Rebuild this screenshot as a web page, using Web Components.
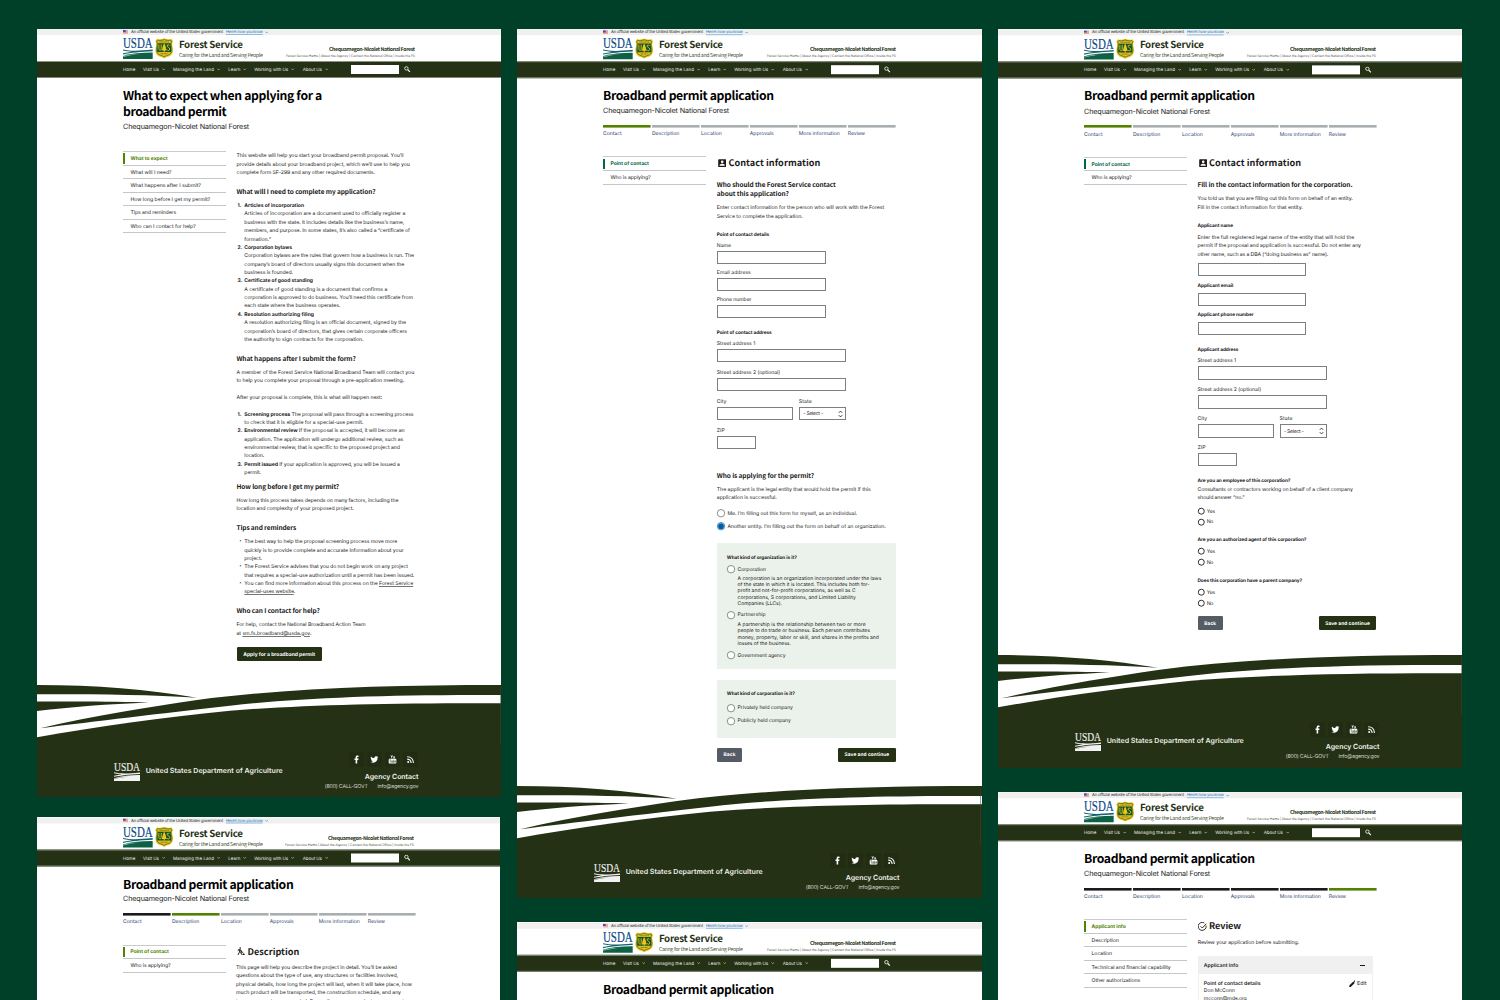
<!DOCTYPE html>
<html lang="en">
<head>
<meta charset="utf-8">
<title>Forest Service broadband permit</title>
<style>
html,body{margin:0;padding:0;width:1500px;height:1000px;overflow:hidden;background:#004028}
</style>
</head>
<body>
<permit-board></permit-board>
<script>
const BODY = 'Inter,"Liberation Sans",sans-serif';
const HEAD = '"Noto Sans CJK SC","Open Sans",sans-serif';

function define(name, render) {
  customElements.define(name, class extends HTMLElement {
    connectedCallback() {
      if (this.shadowRoot) return;
      this.attachShadow({mode: 'open'}).innerHTML = render(this);
    }
  });
}

/* One line of text, tracked to a given measure. */
customElements.define('fs-text', class extends HTMLElement {
  connectedCallback() {
    if (this.shadowRoot) return;
    const a = (n, d) => this.getAttribute(n) || d;
    const head = this.hasAttribute('head');
    this.attachShadow({mode: 'open'}).innerHTML = `<style>
      :host{display:block;white-space:nowrap;
        font:${a('weight', 400)} ${a('size', 5.2)}px/${a('h', 8)}px ${head ? HEAD : BODY};
        height:${a('h', 8)}px;text-rendering:geometricPrecision;flex:none;color:${a('color', 'inherit')}}
      span{display:inline-block;height:100%;line-height:inherit;vertical-align:top;padding-top:${a('drop', head ? 0 : .8)}px}
    </style><span><slot></slot></span>`;
    const span = this.shadowRoot.querySelector('span');
    const w = parseFloat(a('w', 0));
    if (w) {
      const n = this.textContent.length;
      const nat = span.getBoundingClientRect().width;
      const k = (w - nat) / Math.max(1, n - 1);
      span.style.letterSpacing = k.toFixed(4) + 'px';
      span.style.marginRight = (-k).toFixed(4) + 'px';
    }
  }
});

const txt = (w, text, o = {}) => `<fs-text w="${w}" ${Object.entries(o).map(([k, v]) => `${k}="${v}"`).join(' ')}>${text}</fs-text>`;
/* Vertical rhythm helpers: rows are [top, height, html]. */
const T = (y, w, text, o = {}) => { const h = o.h || 8; return [y - h / 2, h, txt(w, text, {h, ...o})]; };
const H = (y, w, text, o = {}) => T(y - .4, w, text, {head: '', weight: 700, size: 6.5, h: 10, ...o});
const L = (y, w, text, o = {}) => T(y, w, text, {weight: 700, size: 4.75, h: 6, drop: 1, ...o});
const LAB = (y, w, text) => T(y, w, text, {size: 5.1, h: 6});
const B = (top, h, html) => [top, h, html];
const IN = (top, w) => B(top, 13.2, `<fs-input style="--w:${w}px"></fs-input>`);
function stack(start, rows) {
  let c = start;
  return rows.map(([t, h, html]) => {
    const m = (t - c).toFixed(2); c = t + h;
    return `<div style="margin-top:${m}px;height:${h}px">${html}</div>`;
  }).join('');
}
const li = (y, n, w, text, o = {}) => { const [t, h] = [y - 4, 8];
  return [t, h, `<div style="display:flex">${n ? `<div style="width:7.8px;padding-left:${n === '•' ? 2.8 : 1}px;box-sizing:border-box">${txt(0, n, {weight: n === '•' ? 400 : 700, size: n === '•' ? 4.2 : 5})}</div>` : '<div style="width:7.8px"></div>'}${txt(w, text, o)}</div>`]; };

define('fs-input', () => `<style>:host{display:block;box-sizing:border-box;width:var(--w);height:13.2px;border:1px solid #7d8083;background:#fff}</style>`);
define('fs-select', () => `<style>:host{display:flex;align-items:center;justify-content:space-between;box-sizing:border-box;width:47px;height:13.2px;border:1px solid #7d8083;padding:0 1.5px 0 3.4px;background:#fff}</style>
  ${txt(20, '- Select -', {size: 5})}<svg width="5" height="8" viewBox="0 0 5 8" fill="none" stroke="#222" stroke-width=".9"><path d="M.8 2.8L2.5 1.1 4.2 2.8M.8 5.2L2.5 6.9 4.2 5.2"/></svg>`);
define('fs-radio', el => {
  const small = el.hasAttribute('small'), r = small ? 3 : 3.7, on = el.hasAttribute('checked');
  return `<style>:host{display:flex;align-items:center;height:8px;gap:2.6px}svg{flex:none;overflow:visible}</style>
  <svg width="${r * 2 + .6}" height="8" viewBox="${-r - .3} -4.2 ${r * 2 + .6} 8"><circle r="${r}" fill="#fff" stroke="${on ? '#005ea2' : small ? '#1b1b1b' : '#5c5f62'}" stroke-width="${small ? .9 : .7}"/>${on ? '<circle r="2.9" fill="#005ea2"/>' : ''}</svg><slot></slot>`;
});
define('fs-button', el => `<style>:host{display:flex;align-items:center;justify-content:center;box-sizing:border-box;width:var(--w);height:14px;border-radius:1.2px;background:${el.hasAttribute('gray') ? '#565c65' : '#253115'};color:#fff}</style><slot></slot>`);

const usda = (w, h, ink, a, b, gap) => `<svg width="${w}" height="${h}" viewBox="0 0 29.6 21" preserveAspectRatio="none" style="flex:none;overflow:visible"><text x="0" y="10.2" font-family="Liberation Serif,serif" font-size="14.6" fill="${ink}" stroke="${ink}" stroke-width=".2" textLength="29.6" lengthAdjust="spacingAndGlyphs">USDA</text>
  <path d="M0 11.4C7 13 14 13.2 29.6 11.6V13.2C17 13.6 8 14.8 0 16.4V15.2C3 14.6 6 14 9 13.7 6 13.5 3 13 0 12.4Z" fill="${a}"/><path d="M0 17.9C9 15.4 19 14.4 29.6 14.5V21H0Z" fill="${b}"/><path d="M0 18.5C7 16.6 12 16.1 17 16 11 16.6 6 17.4 0 19Z" fill="${gap}" fill-opacity=".7"/></svg>`;

define('fs-shield', () => `<style>:host{display:block;width:18.4px;height:20.6px;flex:none}svg{display:block}</style>
  <svg width="18.4" height="20.6" viewBox="0 0 18.4 20.6"><path d="M2 .8C4.2 1.7 6.2 1.5 9.2.3 12.2 1.5 14.2 1.7 16.4.8L18.1 3.2C16.8 5.2 17.2 7 17.7 9.2 18.4 12.8 18 16.3 14.9 18 12.6 19 10.8 19.2 9.2 20.4 7.6 19.2 5.8 19 3.5 18 .4 16.3 0 12.8.7 9.2 1.2 7 1.6 5.2.3 3.2Z" fill="#f3c419"/>
  <path d="M2.6 2.1C4.6 2.7 6.6 2.5 9.2 1.6 11.8 2.5 13.8 2.7 15.8 2.1L16.7 3.2C15.8 5.2 16 7 16.6 9.4 17.2 12.6 16.8 15.3 14.3 16.7 12.2 17.7 10.6 17.8 9.2 18.8 7.8 17.8 6.2 17.7 4.1 16.7 1.6 15.3 1.2 12.6 1.8 9.4 2.4 7 2.6 5.2 1.7 3.2Z" fill="#e6b91c" stroke="#2c6a2a" stroke-width=".7"/>
  <path d="M2.7 5.3H15.7C15.5 8 16.6 10.5 16.1 14H2.3C1.8 10.5 2.9 8 2.7 5.3Z" fill="#0d5429"/>
  <path d="M9.2 5.2L10.5 7.8 10.2 7.8 11.2 10 10.8 10 11.9 12.6H9.7V14H8.7V12.6H6.5L7.6 10 7.2 10 8.2 7.8 7.9 7.8Z" fill="#f3c419"/>
  <path d="M3.9 6.4V10.8C3.9 12.9 6.2 12.9 6.2 10.8V6.4" fill="none" stroke="#f3c419" stroke-width=".9"/>
  <path d="M14.5 7.6C13.8 6.1 11.9 6.6 12.1 8 12.3 9.4 14.7 9.2 14.7 11 14.7 12.9 12.6 12.9 12 11.5" fill="none" stroke="#f3c419" stroke-width=".9"/>
  <path d="M4.6 3.9H13.8M5.8 15.7H12.6" stroke="#55762a" stroke-width=".8" stroke-dasharray="1 .4"/></svg>`);

const chev = (c = '#dfe3d8') => `<svg width="3.4" height="3" viewBox="0 0 3.4 3" fill="none" stroke="${c}" stroke-width=".6" style="flex:none;display:block"><path d="M.5.7L1.7 1.9 2.9.7"/></svg>`;

define('fs-header', el => {
  const g = (w, t, after, arrow) => `<div class="n" style="margin-right:${after}px">${txt(w, t, {size: 4.45, h: 6, drop: 1.7})}${arrow ? chev() : ''}</div>`;
  return `<style>
  :host{display:block;height:49px;flex:none}
  .ban{height:6.4px;padding-left:86px;background:#f0f0f0;display:flex;align-items:center;color:#1b1b1b}
  .main{height:26px;display:flex;padding:0 86px;box-sizing:border-box}
  .brand{padding:4px 0 0 5px;color:#253115}
  .right{margin-left:auto;display:flex;flex-direction:column;align-items:flex-end;padding-top:11.3px;color:#253115}
  .nav{height:16.2px;background:#253115;border-top:1px solid #8b9283;border-bottom:1px solid #7d8574;box-sizing:border-box;display:flex;align-items:center;padding-left:86px;color:#e6e8e2}
  .n{display:flex;align-items:center;gap:3px}
  .s{width:48px;height:9.4px;background:#fff;flex:none}
  </style>
  <div class="ban"><svg width="5" height="4" viewBox="0 0 5 4" style="margin-right:3px"><path fill="#fff" d="M0 0h5v4H0z"/><path stroke="#db3e1f" stroke-width=".5" d="M0 .25H5M0 1.25H5M0 2.25H5M0 3.25H5"/><path fill="#3c4fc4" d="M0 0h2.7v2.2H0z"/></svg>
  ${txt(92, 'An official website of the United States government', {size: 4.15, h: 5, drop: .2})}<div style="width:3px"></div>${txt(37, "<span style='text-decoration:underline;text-decoration-color:#8fbbe0;text-decoration-thickness:.4px;text-underline-offset:.7px'>Here’s how you know</span>", {size: 4.15, h: 5, color: '#2378c3', drop: .2})}<div style="width:2px"></div>${chev('#2378c3')}</div>
  <div class="main"><div style="padding-top:3px">${usda(29.7, 21, '#0b4a86', '#14606f', '#0d6245', '#fff')}</div><fs-shield style="margin:2.7px 0 0 2.8px"></fs-shield>
  <div class="brand">${txt(64, 'Forest Service', {head: '', weight: 700, size: 9.7, h: 10})}<div style="height:3px"></div>${txt(84, 'Caring for the Land and Serving People', {head: '', size: 5.25, h: 7, color: '#3f5230'})}</div>
  <div class="right">${txt(86, 'Chequamegon-Nicolet National Forest', {head: '', weight: 700, size: 5.2, h: 6})}${txt(129, 'Forest Service Home | About the Agency | Contact the National Office | Inside the FS', {size: 3.4, h: 6, color: '#555e4b'})}</div></div>
  <div class="nav">${g(12.3, 'Home', 7.7)}${g(16, 'Visit Us', 7.5, 1)}${g(41, 'Managing the Land', 7.9, 1)}${g(12.3, 'Learn', 7.3, 1)}${g(34, 'Working with Us', 8.1, 1)}${g(19.3, 'About Us', 23, 1)}<div class="s"></div>
  <svg width="6.4" height="6.4" viewBox="0 0 6.4 6.4" style="margin-left:4.8px" fill="none" stroke="#fff"><circle cx="2.4" cy="2.4" r="1.7" stroke-width=".8"/><path d="M3.7 3.7L5.9 5.9" stroke-width="1.1"/></svg></div>`;
});

define('fs-footer', () => {
  const ic = p => `<div class="i"><svg width="9" height="9" viewBox="0 0 9 9" fill="#fff">${p}</svg></div>`;
  return `<style>:host{display:block;height:var(--fh,112px);position:relative;flex:none;overflow:hidden;color:#eef0ea}
  .w{position:absolute;left:0;top:0}
  .c{position:relative;display:flex;justify-content:space-between;padding:67px 82.5px 0 77px}
  .l{display:flex;gap:5.7px;padding-top:9.6px}
  .r{display:flex;flex-direction:column;align-items:flex-end}
  .ii{display:flex;gap:3px;margin-right:1px}.i{width:15px;height:15px;background:#212c12;display:flex;align-items:center;justify-content:center}
  </style><svg class="w" width="465" height="113" viewBox="0 0 465 113" fill="#253115"><path d="M0 0C60 0 110 4.5 160 12.7 110 9.6 60 9.2 0 9.3Z"/><path d="M0 16.6C50 16.2 85 16.6 112 17.4 70 19 35 21.8 0 26Z"/><path d="M3 43.3C60 30 110 22.5 160 15 250 3.2 350 0 465 0V10C350 9.3 260 13 193 20.7 120 29 60 36 3 43.3Z"/><path d="M0 52.3C60 41.5 130 31.8 193 25.7 270 19.8 350 18 465 18.3V113H0Z"/><path d="M463.5 2V59" stroke="#3d4930" stroke-width=".5"/></svg>
  <div class="c"><div class="l">${usda(26, 19, '#f2f2f2', '#f2f2f2', '#f2f2f2', '#253115')}${txt(137, 'United States Department of Agriculture', {weight: 600, size: 7, h: 18, drop: 0})}</div>
  <div class="r"><div class="ii">${ic('<path d="M3.6 8.5V5H2.5V3.6H3.6V2.6C3.6 1.2 4.4.6 5.5.6L6.6.7V2H5.9C5.3 2 5.2 2.3 5.2 2.7V3.6H6.5L6.3 5H5.2V8.5Z"/>')}${ic('<path d="M8.3 1.9C8 2.1 7.7 2.1 7.4 2.2 7.8 2 8 1.7 8.1 1.3L7.1 1.7C6 .6 4.2 1.4 4.4 3.1 3 3 1.8 2.4 1 1.4.5 2.2.8 3.1 1.5 3.6L.8 3.4C.8 4.3 1.4 4.9 2.1 5.1H1.4C1.6 5.8 2.2 6.2 2.9 6.2 2.2 6.8 1.4 7 .5 6.9 4 8.9 7.7 6.9 7.6 2.8Z"/>')}${ic('<path d="M2.5.2H3.3L3.7 1.5 4.1.2H4.8L4.1 2.2V3.3H3.4V2.2ZM5 1.2H5.6V2.9L6.1 2.7V1.2H6.8V3.3H5.1ZM1.6 3.8H7.5C8.2 3.8 8.4 4.4 8.4 6.2S8.2 8.6 7.5 8.6H1.6C.8 8.6.7 8 .7 6.2S.8 3.8 1.6 3.8Z"/><path d="M1.5 4.8H3.1M2.3 4.8V7.8M3.5 5.5V7.4H4.5V5.5M5.3 4.6V7.5H6.1V5.8H5.3M7.7 7.3H6.9V5.8H7.7V6.5H7" fill="none" stroke="#253115" stroke-width=".45"/>')}${ic('<circle cx="2.2" cy="7" r="1"/><path d="M1.2 4.1C3.5 4.1 5.1 5.7 5.1 8M1.2 1.7C4.8 1.7 7.4 4.3 7.4 8" fill="none" stroke="#fff" stroke-width="1.1"/>')}</div>
  <div style="height:5.2px"></div>${txt(53.7, 'Agency Contact', {weight: 600, size: 7, h: 8})}<div style="display:flex;gap:9.7px;margin-top:2.3px">${txt(43, '(800) CALL-GOVT', {size: 5.3, h: 7, color: '#d3d6cd', drop: 1.2})}${txt(41, 'info@agency.gov', {size: 5.3, h: 7, color: '#d3d6cd', drop: 1.2})}</div></div></div>`;
});

define('fs-steps', el => {
  const cur = +el.getAttribute('current');
  const s = [[18.7, 'Contact'], [27.3, 'Description'], [21, 'Location'], [24, 'Approvals'], [41, 'More information'], [17.3, 'Review']];
  return `<style>:host{display:flex;gap:1.2px;width:292.4px}.s{flex:1;width:0;color:#2a4270}.s svg{display:block;margin-bottom:2.6px;fill:#a9aeb1}.d svg{fill:#1b1b1b}.c svg{fill:#538200}</style>` +
    s.map(([w, t], i) => `<div class="s ${i < cur ? 'd' : i == cur ? 'c' : ''}"><svg width="48" height="3"><rect width="47.6" height="2.6"/></svg>${txt(w, t, {size: 5.1, h: 6, drop: .9})}</div>`).join('');
});

define('fs-sidenav', el => {
  const col = el.getAttribute('accent') || '#538200';
  return `<style>:host{display:block;width:103px;border-top:1px solid #c9cccd;flex:none}
  .i{height:13.53px;box-sizing:border-box;border-bottom:1px solid #c4c7c9;display:flex;align-items:center}
  .b{width:2.1px;height:10.3px;margin-right:5.4px}.on .b{background:${col}}.on{color:${col}}</style>` +
    JSON.parse(el.getAttribute('items')).map(([w, t], i) => `<div class="i ${i ? '' : 'on'}"><div class="b"></div>${txt(w, t, {size: i ? 5.2 : 5, weight: i ? 400 : 700, h: 8, drop: .6})}</div>`).join('');
});

define('fs-page', () => `<style>:host{display:flex;flex-direction:column;background:#fff;width:var(--pw,464px);height:var(--ph);flex:none;overflow:hidden;color:#1b1b1b}</style><slot></slot>`);

const nav = (items, accent) => `<fs-sidenav ${accent ? `accent="${accent}"` : ''} items='${JSON.stringify(items)}'></fs-sidenav>`;
/* Page shell: intro rows, then a two-column area with side navigation and main rows. */
function page({top, h, w = 464, dy = 0, fh = 112, intro, navTop, side, mainX, rows, footer}) {
  const introH = navTop - top - 49;
  return `<fs-page style="--ph:${h}px;--pw:${w}px"><fs-header style="margin-bottom:${dy}px;transform:translateY(${dy}px)"></fs-header>
  <div style="height:${introH - dy}px;padding-left:86px;flex:none">${stack(top + 49 + dy, intro)}</div>
  ${side ? `<div style="display:flex;padding-left:86px;align-items:flex-start;flex:1;min-height:0">${side}<div style="margin-left:${mainX - 189}px">${stack(navTop, rows)}</div></div>` : ''}
  ${footer ? `<fs-footer style="--fh:${fh}px"></fs-footer>` : ''}</fs-page>`;
}
const title = (y, w, t) => T(y - .8, w, t, {head: '', weight: 700, size: 12.2, h: 16, color: '#000'});
const sub = (y) => T(y, 126.2, 'Chequamegon-Nicolet National Forest', {size: 7.2, h: 9, drop: .1});
const steps = (y, c) => B(y, 12, `<fs-steps current="${c}"></fs-steps>`);
const contactIcon = `<svg width="8.4" height="8.4" viewBox="0 0 8.4 8.4"><path fill="#1b1b1b" fill-rule="evenodd" d="M1 .3H7.4Q8.2.3 8.2 1.1V7.3Q8.2 8.1 7.4 8.1H1Q.2 8.1.2 7.3V1.1Q.2.3 1 .3ZM4.2 1.4A1.35 1.35 0 1 0 4.2 4.1 1.35 1.35 0 1 0 4.2 1.4ZM1.6 6.7H6.8V6.3C6.8 5.3 5.3 4.8 4.2 4.8S1.6 5.3 1.6 6.3Z"/></svg>`;
const secHead = (y, icon, w, t) => B(y - 6, 12, `<div style="display:flex;align-items:flex-start;gap:2px;padding-left:1.2px"><div style="height:9px;padding-top:1.5px;line-height:0">${icon}</div><div style="margin-top:-.9px">${txt(w, t, {head: '', weight: 700, size: 9.1, h: 12})}</div></div>`);
const radio = (y, w, t, o = '', x = 0) => B(y - 4, 8, `<fs-radio ${o} style="margin-left:${x}px">${txt(w, t, {size: 5.1})}</fs-radio>`);
const buttons = y => B(y, 14, `<div style="display:flex;justify-content:space-between;width:178.9px"><fs-button gray style="--w:25.3px">${txt(12, 'Back', {weight: 700, size: 4.8, drop: .5})}</fs-button><fs-button style="--w:57.7px">${txt(44.7, 'Save and continue', {weight: 700, size: 4.8, drop: .5})}</fs-button></div>`);
const cityState = (y, inTop) => [B(y - 3, 6, `<div style="display:flex"><div style="width:82px">${txt(9.5, 'City', {size: 5.1, h: 6})}</div>${txt(13, 'State', {size: 5.1, h: 6})}</div>`),
  B(inTop, 13.2, `<div style="display:flex;gap:6px"><fs-input style="--w:76px"></fs-input><fs-select></fs-select></div>`)];
const u = s => `<span style="text-decoration:underline;text-decoration-color:#777;text-decoration-thickness:.5px;text-underline-offset:1px">${s}</span>`;
const desc = (y, w, t) => B(y - 3, 6, `<div style="padding-left:20.8px">${txt(w, t, {size: 5, h: 6})}</div>`);
const pad = (row, x) => [row[0], row[1], `<div style="padding-left:${x}px">${row[2]}</div>`];

const p1 = page({top: 29, h: 768, navTop: 151.3, mainX: 199.5, footer: 1,
  intro: [title(95.8, 199.3, 'What to expect when applying for a'), title(111.8, 103.7, 'broadband permit'), sub(126.7)],
  side: nav([[37, 'What to expect'], [41, 'What will I need?'], [70.5, 'What happens after I submit?'], [79.7, 'How long before I get my permit?'], [45.7, 'Tips and reminders'], [65.3, 'Who can I contact for help?']]),
  rows: [T(155.6, 167, 'This website will help you start your broadband permit proposal. You’ll'), T(164, 173.3, 'provide details about your broadband project, which we’ll use to help you'), T(172.3, 138.5, 'complete form SF-299 and any other required documents.'),
    H(191.3, 139, 'What will I need to complete my application?'),
    li(205.3, '1.', 59.7, 'Articles of incorporation', {weight: 700, size: 5}), li(213.6, '', 161, 'Articles of incorporation are a document used to officially register a'), li(222, '', 160, 'business with the state. It includes details like the business’s name,'), li(230.4, '', 165.7, 'members, and purpose. In some states, it’s also called a “certificate of'), li(238.8, '', 26.7, 'formation.”'),
    li(247.1, '2.', 47.7, 'Corporation bylaws', {weight: 700, size: 5}), li(255.5, '', 169.7, 'Corporation bylaws are the rules that govern how a business is run. The'), li(263.9, '', 160, 'company’s board of directors usually signs this document when the'), li(272.3, '', 48.7, 'business is founded.'),
    li(280.7, '3.', 68.7, 'Certificate of good standing', {weight: 700, size: 5}), li(289.1, '', 143, 'A certificate of good standing is a document that confirms a'), li(297.5, '', 168.7, 'corporation is approved to do business. You’ll need this certificate from'), li(305.8, '', 96, 'each state where the business operates.'),
    li(314.2, '4.', 69.7, 'Resolution authorizing filing', {weight: 700, size: 5}), li(322.6, '', 161.7, 'A resolution authorizing filing is an official document, signed by the'), li(331, '', 162.7, 'corporation’s board of directors, that gives certain corporate officers'), li(339.4, '', 119.3, 'the authority to sign contracts for the corporation.'),
    H(358.3, 119.3, 'What happens after I submit the form?'), T(372.2, 177.7, 'A member of the Forest Service National Broadband Team will contact you'), T(380.5, 167.7, 'to help you complete your proposal through a pre-application meeting.'), T(397.3, 145.7, 'After your proposal is complete, this is what will happen next:'),
    li(414, '1.', 169.3, '<b>Screening process</b> The proposal will pass through a screening process'), li(422.4, '', 119, 'to check that it is eligible for a special-use permit.'), li(430.8, '2.', 160.3, '<b>Environmental review</b> If the proposal is accepted, it will become an'), li(439.1, '', 159, 'application. The application will undergo additional review, such as'), li(447.5, '', 155.7, 'environmental review, that is specific to the proposed project and'), li(455.9, '', 20, 'location.'), li(464.2, '3.', 155.7, '<b>Permit issued</b> If your application is approved, you will be issued a'), li(472.6, '', 16.7, 'permit.'),
    H(486.4, 102.7, 'How long before I get my permit?'), T(500.3, 162, 'How long this process takes depends on many factors, including the'), T(508.7, 117.3, 'location and complexity of your proposed project.'),
    H(527.7, 59.7, 'Tips and reminders'),
    li(541.7, '•', 153, 'The best way to help the proposal screening process move more'), li(550, '', 159.3, 'quickly is to provide complete and accurate information about your'), li(558.4, '', 17.7, 'project.'), li(566.8, '•', 163.7, 'The Forest Service advises that you do not begin work on any project'), li(575.2, '', 170, 'that requires a special-use authorization until a permit has been issued.'), li(583.6, '•', 169, 'You can find more information about this process on the ' + u('Forest Service')), li(592, '', 51, u('special-uses website') + '.'),
    H(610.7, 83.3, 'Who can I contact for help?'), T(624.9, 129, 'For help, contact the National Broadband Action Team'), T(633.1, 75, 'at ' + u('sm.fs.broadband@usda.gov') + '.'),
    B(647.5, 14, `<fs-button style="--w:85.3px">${txt(72, 'Apply for a broadband permit', {weight: 700, size: 5, drop: .5})}</fs-button>`)]});

const p2 = page({top: 29, h: 869, w: 465, dy: .2, navTop: 156.5, mainX: 199.8, footer: 1,
  intro: [title(95.9, 171, 'Broadband permit application'), sub(110.7), steps(124.9, 0)],
  side: nav([[38.3, 'Point of contact'], [40.3, 'Who is applying?']], '#006747'),
  rows: [secHead(163.3, contactIcon, 92, 'Contact information'), H(184.6, 119, 'Who should the Forest Service contact'), H(193.7, 72, 'about this application?'),
    T(207.5, 167.3, 'Enter contact information for the person who will work with the Forest'), T(216, 86, 'Service to complete the application.'),
    L(233.7, 52.3, 'Point of contact details'), LAB(244.9, 14.3, 'Name'), IN(250.6, 109), LAB(272, 34, 'Email address'), IN(277.9, 109), LAB(299.2, 34.7, 'Phone number'), IN(305.1, 109),
    L(331.9, 55, 'Point of contact address'), LAB(343, 38.5, 'Street address 1'), IN(349.2, 129), LAB(372, 63.3, 'Street address 2 (optional)'), IN(378.2, 129), ...cityState(401, 407.3), LAB(430, 8, 'ZIP'), IN(436.3, 39),
    H(475.6, 97.3, 'Who is applying for the permit?'), T(489.2, 154, 'The applicant is the legal entity that would hold the permit if this'), T(497.7, 60, 'application is successful.'),
    radio(513.3, 129.7, 'Me. I’m filling out this form for myself, as an individual.'), radio(526.1, 158.3, 'Another entity. I’m filling out the form on behalf of an organization.', 'checked'),
    B(543.2, 126.2, `<div style="background:#ebf2eb;width:178.9px;height:126.2px;overflow:hidden">${stack(543.2, [pad(L(557, 70, 'What kind of organization is it?'), 10), radio(569, 28.5, 'Corporation', '', 10.2), desc(578.7, 143.7, 'A corporation is an organization incorporated under the laws'), desc(584.8, 132, 'of the state in which it is located. This includes both for-'), desc(591, 118, 'profit and not-for-profit corporations, as well as C'), desc(597.1, 118.3, 'corporations, S corporations, and Limited Liability'), desc(603.2, 44.3, 'Companies (LLCs).'), radio(615, 28, 'Partnership', '', 10.2), desc(624.8, 128, 'A partnership is the relationship between two or more'), desc(631, 132.3, 'people to do trade or business. Each person contributes'), desc(637.1, 141.3, 'money, property, labor or skill, and shares in the profits and'), desc(643.2, 53.3, 'losses of the business.'), radio(655.2, 48, 'Government agency', '', 10.2)])}</div>`),
    B(680, 58, `<div style="background:#ebf2eb;width:178.9px;height:58px;overflow:hidden">${stack(680, [pad(L(693.6, 68, 'What kind of corporation is it?'), 10), radio(708, 55.3, 'Privately held company', '', 10.2), radio(721, 53.3, 'Publicly held company', '', 10.2)])}</div>`),
    buttons(748)]});

const yn = y => [radio(y, 8.5, 'Yes', 'small', 0), radio(y + 10.7, 6.7, 'No', 'small', 0)];
const p3 = page({top: 29, h: 739, dy: .4, fh: 113, navTop: 156.8, mainX: 199.5, footer: 1,
  intro: [title(96.2, 171, 'Broadband permit application'), sub(111), steps(125.3, 0)],
  side: nav([[38.3, 'Point of contact'], [40.3, 'Who is applying?']], '#006747'),
  rows: [secHead(163.4, contactIcon, 92, 'Contact information'), H(184.8, 155, 'Fill in the contact information for the corporation.'),
    T(198.7, 155.3, 'You told us that you are filling out this form on behalf of an entity.'), T(207.1, 105.3, 'Fill in the contact information for that entity.'),
    L(225, 35.7, 'Applicant name'), T(237.3, 156.7, 'Enter the full registered legal name of the entity that will hold the'), T(245.7, 163.5, 'permit if the proposal and application is successful. Do not enter any'), T(254.2, 130.7, 'other name, such as a DBA (“doing business as” name).'),
    IN(263.2, 108.7), L(285, 35.7, 'Applicant email'), IN(292.9, 108.7), L(314.4, 56.3, 'Applicant phone number'), IN(322.4, 108.7), L(349.3, 41, 'Applicant address'),
    LAB(360.4, 38.7, 'Street address 1'), IN(366.6, 129.3), LAB(389.4, 63.5, 'Street address 2 (optional)'), IN(395.5, 129.3), ...cityState(418.5, 424.5), LAB(447.4, 8, 'ZIP'), IN(453.5, 39),
    L(480.5, 93, 'Are you an employee of this corporation?'), T(489, 155.3, 'Consultants or contractors working on behalf of a client company'), T(497.4, 47, 'should answer “no.”'), ...yn(511.1),
    L(539.2, 109, 'Are you an authorized agent of this corporation?'), ...yn(551.7), L(579.8, 104.7, 'Does this corporation have a parent company?'), ...yn(592.4), buttons(616.8)]});

const descIcon = `<svg width="8.2" height="8.4" viewBox="0 0 8.2 8.4" fill="none" stroke="#1b1b1b" stroke-width=".95"><circle cx="3.2" cy="1" r=".8" fill="#1b1b1b" stroke="none"/><path d="M.7 3.6L2.8 2.4 4.3 3.4V5.4L5.1 8M3 2.8L2.4 5.2 1 8M2.6 5L4 6.2M1.5 2.5L6.3 5.8"/><path d="M5.4 8.1L6.8 6 8.1 8.1Z" fill="#1b1b1b" stroke="none"/></svg>`;
const p4 = page({top: 817, h: 240, w: 463, dy: .5, navTop: 944.6, mainX: 199,
  intro: [title(884.4, 170.7, 'Broadband permit application'), sub(898.8), steps(912.9, 1)],
  side: nav([[38.3, 'Point of contact'], [40.3, 'Who is applying?']]),
  rows: [secHead(951.6, descIcon, 52, 'Description'), T(967.3, 161, 'This page will help you describe the project in detail. You’ll be asked'), T(975.6, 162, 'questions about the type of use, any structures or facilities involved,'), T(984, 176, 'physical details, how long the project will last, when it will take place, how'), T(992.4, 165, 'much product will be transported, the construction schedule, and any'), T(1000.8, 168, 'temporary work areas needed. Depending on your project, you may not')]});

const p5 = page({top: 922, h: 120, w: 465, dy: .8, navTop: 1030, intro: [title(989.6, 171, 'Broadband permit application')]});

const checkIcon = `<svg width="9" height="9" viewBox="0 0 9 9" fill="none" stroke="#1b1b1b" stroke-width=".9"><path d="M8.1 3.6A4 4 0 1 1 6.3 1M2.6 4.3L4.3 6 8.2 1.8"/></svg>`;
const p6 = page({top: 792, h: 240, dy: .2, navTop: 919.4, mainX: 199.7,
  intro: [title(859.1, 171, 'Broadband permit application'), sub(873.6), steps(887.8, 5)],
  side: nav([[34.3, 'Applicant info'], [27.3, 'Description'], [20.7, 'Location'], [79.3, 'Technical and financial capability'], [48.7, 'Other authorizations']]),
  rows: [secHead(926.3, checkIcon, 32, 'Review').map((v, i) => i == 2 ? v.replace('padding-left:1.2px', 'padding-left:.4px') : v), T(942, 101.3, 'Review your application before submitting.'),
    B(956.3, 80, `<div style="width:175.3px;height:80px;box-sizing:border-box;border:1px solid #f0f0f0;border-top:0;background:#fff"><div style="height:17.7px;background:#f0f0f0;display:flex;align-items:center;justify-content:space-between;padding:0 6.8px 0 5.1px">${txt(34.5, 'Applicant Info', {weight: 600, size: 5.1})}<div style="width:5px;height:1px;background:#1b1b1b"></div></div>
    <div style="padding:5.9px 5.4px 0 5.1px;display:flex;justify-content:space-between"><div>${txt(56.7, 'Point of contact details', {weight: 600, size: 5.1, h: 7.7})}${txt(31, 'Don McConn', {h: 7.7})}${txt(43, 'mcconn@mde.org', {h: 7.7})}</div><div style="display:flex;gap:2px"><svg width="6.6" height="7.6" viewBox="0 0 6.6 7.6" fill="#1b1b1b"><path d="M.3 6.9V5.5L4.3 1.5 5.7 2.9 1.7 6.9ZM4.7 1.1L5.3.5Q5.6.3 5.9.5L6.5 1.1Q6.8 1.5 6.5 1.8L6 2.4Z"/></svg>${txt(9.5, 'Edit', {h: 7.7, size: 5.4})}</div></div></div>`)]});

define('permit-board', () => `<style>:host{display:flex;gap:16px;padding:29px 37px;box-sizing:border-box;width:1500px;height:1000px;overflow:hidden;background:#004028}
  .c{display:flex;flex-direction:column;flex:none}</style>
  <div class="c" style="gap:20px;width:464px">${p1}${p4}</div><div class="c" style="gap:24px;width:465px">${p2}${p5}</div><div class="c" style="gap:24px;width:464px">${p3}${p6}</div>`);
</script>
</body>
</html>
